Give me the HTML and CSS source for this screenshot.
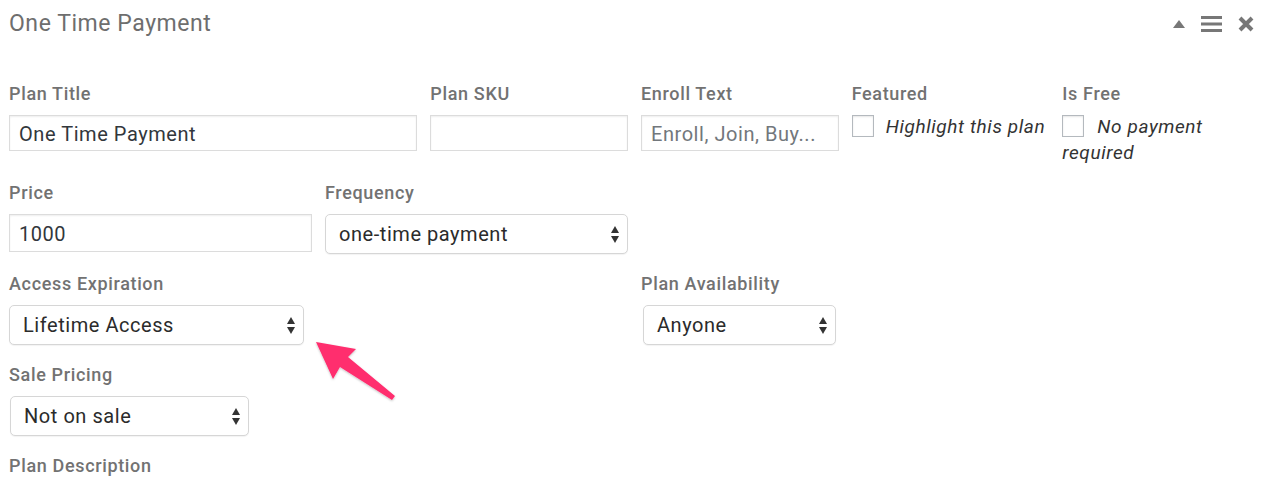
FILE: index.html
```html
<!DOCTYPE html>
<html>
<head>
<meta charset="utf-8">
<link rel="stylesheet" href="styles.css">
</head>
<body>
<div class="page">
  <header class="head">
    <h1 class="title">One Time Payment</h1>
    <div class="tools">
      <svg class="ico" width="12" height="8" viewBox="0 0 12 8"><polygon points="6,0 12,8 0,8" fill="#777"/></svg>
      <svg class="ico" width="21" height="16" viewBox="0 0 21 16"><rect x="0" y="0" width="21" height="3" fill="#777"/><rect x="0" y="6.5" width="21" height="3" fill="#777"/><rect x="0" y="13" width="21" height="3" fill="#777"/></svg>
      <svg class="ico" width="16" height="16" viewBox="0 0 16 16"><path d="M2 2 L14 14 M14 2 L2 14" stroke="#777" stroke-width="4" stroke-linecap="butt"/></svg>
    </div>
  </header>

  <div class="row row-first">
    <div class="field span4">
      <div class="lbl">Plan Title</div>
      <div class="input">One Time Payment</div>
    </div>
    <div class="field span2">
      <div class="lbl">Plan SKU</div>
      <div class="input"></div>
    </div>
    <div class="field span2">
      <div class="lbl">Enroll Text</div>
      <div class="input placeholder">Enroll, Join, Buy...</div>
    </div>
    <div class="field span2">
      <div class="lbl">Featured</div>
      <div class="check"><span class="box"></span><em>Highlight this plan</em></div>
    </div>
    <div class="field span2">
      <div class="lbl">Is Free</div>
      <div class="check"><span class="box box-wide"></span><em>No payment required</em></div>
    </div>
  </div>

  <div class="row">
    <div class="field span3">
      <div class="lbl">Price</div>
      <div class="input input-tall">1000</div>
    </div>
    <div class="field span3">
      <div class="lbl">Frequency</div>
      <div class="select w-full"><span>one-time payment</span><svg class="updown" width="8" height="17" viewBox="0 0 8 17"><polygon points="4,0 8,7 0,7" fill="#333"/><polygon points="0,10 8,10 4,17" fill="#333"/></svg></div>
    </div>
  </div>

  <div class="row">
    <div class="field span6">
      <div class="lbl">Access Expiration</div>
      <div class="select w-access"><span>Lifetime Access</span><svg class="updown" width="8" height="17" viewBox="0 0 8 17"><polygon points="4,0 8,7 0,7" fill="#333"/><polygon points="0,10 8,10 4,17" fill="#333"/></svg></div>
    </div>
    <div class="field span6">
      <div class="lbl">Plan Availability</div>
      <div class="select w-avail"><span>Anyone</span><svg class="updown" width="8" height="17" viewBox="0 0 8 17"><polygon points="4,0 8,7 0,7" fill="#333"/><polygon points="0,10 8,10 4,17" fill="#333"/></svg></div>
    </div>
  </div>

  <div class="row">
    <div class="field span12">
      <div class="lbl">Sale Pricing</div>
      <div class="select w-sale"><span>Not on sale</span><svg class="updown" width="8" height="17" viewBox="0 0 8 17"><polygon points="4,0 8,7 0,7" fill="#333"/><polygon points="0,10 8,10 4,17" fill="#333"/></svg></div>
    </div>
  </div>

  <div class="row">
    <div class="field span12">
      <div class="lbl">Plan Description</div>
    </div>
  </div>

  <svg class="pointer" width="110" height="85" viewBox="300 325 110 85">
    <defs>
      <filter id="sh" x="-20%" y="-20%" width="140%" height="140%">
        <feDropShadow dx="0" dy="1" stdDeviation="1" flood-color="#000" flood-opacity="0.25"/>
      </filter>
    </defs>
    <polygon filter="url(#sh)" fill="#ff2d6e" points="316,342 356,349 348,357 395,396 392,400 340,367 333,379"/>
  </svg>
</div>
</body>
</html>
```

FILE: styles.css
```css
html, body {
  margin: 0;
  padding: 0;
  background: #fff;
}
body {
  font-family: Roboto, "Liberation Sans", Arial, sans-serif;
}
.page {
  position: relative;
  width: 1264px;
  padding-left: 9px;
  height: 480px;
  overflow: hidden;
}
.head {
  display: flex;
  align-items: center;
  justify-content: space-between;
  padding-top: 10px;
  padding-right: 19px;
  height: 28px;
  margin-bottom: 45px;
}
.title {
  margin: 0;
  font-size: 23px;
  line-height: 28px;
  font-weight: 400;
  letter-spacing: 0.55px;
  color: #6e6e6e;
}
.tools {
  display: flex;
  align-items: center;
  gap: 16px;
}
.ico { display: block; }

.row {
  display: grid;
  grid-template-columns: repeat(12, 1fr);
  margin-bottom: 19px;
}
.row-first { margin-bottom: 16px; }
.span2 { grid-column: span 2; }
.span3 { grid-column: span 3; }
.span4 { grid-column: span 4; }
.span6 { grid-column: span 6; }
.span12 { grid-column: span 12; }

.field {
  padding-right: 13px;
  min-width: 0;
}
.lbl {
  font-size: 18px;
  line-height: 22px;
  font-weight: 500;
  letter-spacing: 0.65px;
  color: #727272;
  margin-bottom: 10px;
}
.input {
  box-sizing: border-box;
  height: 36px;
  border: 1px solid #dcdcdc;
  box-shadow: inset 0 1px 2px rgba(0,0,0,0.07);
  background: #fff;
  padding: 1px 9px 0;
  font-size: 20px;
  line-height: 34px;
  letter-spacing: 0.55px;
  color: #32373c;
  white-space: nowrap;
  overflow: hidden;
}
.input-tall {
  height: 38px;
  line-height: 36px;
  margin-top: 1px;
}
.placeholder { color: #72777c; }

.check {
  margin-top: -1px;
  font-size: 19px;
  line-height: 26px;
  letter-spacing: 0.6px;
  color: #333;
}
.check em { font-style: italic; }
.box {
  display: inline-block;
  box-sizing: border-box;
  width: 22px;
  height: 22px;
  border: 1px solid #b4b9be;
  box-shadow: inset 0 1px 2px rgba(0,0,0,0.1);
  background: #fff;
  vertical-align: -4px;
  margin-right: 12px;
}
.box-wide { margin-right: 13px; }

.select {
  box-sizing: border-box;
  height: 40px;
  display: flex;
  align-items: center;
  justify-content: space-between;
  border: 1px solid #d6d6d6;
  border-radius: 5px;
  background: #fff;
  padding: 0 8px 0 13px;
  font-size: 20px;
  letter-spacing: 0.55px;
  color: #2b2b2b;
  box-shadow: 0 1px 1px rgba(0,0,0,0.05);
}
.updown { display: block; flex: none; }
.w-full { width: 100%; }
.w-access { width: 295px; }
.w-avail { width: 193px; margin-left: 2px; }
.w-sale { width: 239px; margin-left: 1px; }

.pointer {
  position: absolute;
  left: 300px;
  top: 325px;
}
```
